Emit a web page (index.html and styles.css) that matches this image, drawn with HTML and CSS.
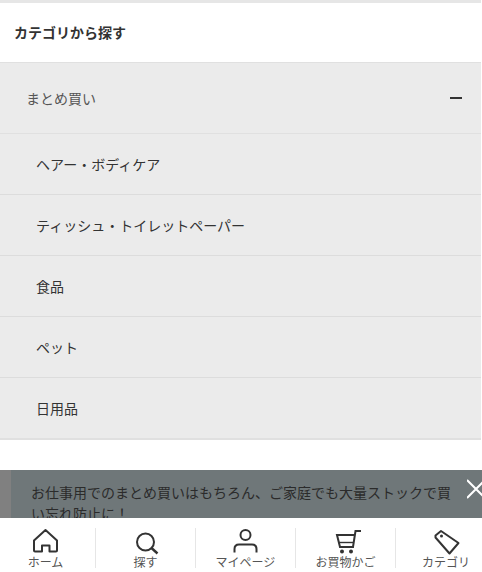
FILE: index.html
```html
<!doctype html>
<html lang="ja">
  <head>
    <meta charset="utf-8">
    <meta name="viewport" content="width=device-width, initial-scale=1">
    <title>カテゴリから探す</title>
    <link rel="stylesheet" href="styles.css">
  </head>
  <body>
    <div class="page">
      <div class="content">
        <h2 class="section-title">カテゴリから探す</h2>
        <div class="accordion">
          <div class="accordion-head">
            <span>まとめ買い</span>
            <span class="minus"></span>
          </div>
          <ul class="sub-list">
            <li>ヘアー・ボディケア</li>
            <li>ティッシュ・トイレットペーパー</li>
            <li>食品</li>
            <li>ペット</li>
            <li>日用品</li>
          </ul>
        </div>
      </div>
      <div class="banner">
        <div class="banner-side"></div>
        <p class="banner-text">お仕事用でのまとめ買いはもちろん、ご家庭でも大量ストックで買い忘れ防止に！</p>
        <svg class="banner-close" width="20" height="20" viewBox="0 0 20 20">
          <path d="M0 1L18 19M18 1L0 19" stroke="#fff" stroke-width="2" fill="none"/>
        </svg>
      </div>
      <nav class="tabbar">
        <a class="tab">
          <svg width="31" height="27" viewBox="0 0 31 27" fill="none" stroke="#333" stroke-width="2" stroke-linejoin="round">
            <path d="M15.500 2L27 12.500V22.500Q27 23.500 26 23.500H19.500V17.500H12V23.500H5Q4 23.500 4 22.500V12.500Z"/>
          </svg>
          <span>ホーム</span>
        </a>
        <a class="tab">
          <svg width="31" height="27" viewBox="0 0 31 27" fill="none" stroke="#333" stroke-width="2">
            <circle cx="15.500" cy="14" r="8.500"/>
            <path d="M21.500 20L27.500 25.500" stroke-width="2.400"/>
          </svg>
          <span>探す</span>
        </a>
        <a class="tab">
          <svg width="31" height="27" viewBox="0 0 31 27" fill="none" stroke="#333" stroke-width="2">
            <circle cx="15.500" cy="7" r="5"/>
            <path d="M4.500 24.500V21Q4.500 16.500 9 16.500H22Q26.500 16.500 26.500 21V24.500"/>
          </svg>
          <span>マイページ</span>
        </a>
        <a class="tab">
          <svg width="31" height="27" viewBox="0 0 31 27" fill="none" stroke="#333" stroke-width="2">
            <path d="M31 3H25.500L23 19H10L7 7H24"/>
            <path d="M9 14.500H23.500" stroke-width="1.400"/>
            <circle cx="12" cy="23.500" r="2" fill="#333" stroke="none"/>
            <circle cx="21" cy="23.500" r="2" fill="#333" stroke="none"/>
          </svg>
          <span>お買物かご</span>
        </a>
        <a class="tab">
          <svg width="31" height="27" viewBox="0 0 31 27" fill="none" stroke="#333" stroke-width="2" stroke-linejoin="round">
            <path d="M4.500 7.500L10 3L27.500 15L18.500 25.500L4.500 9.500Z"/>
            <circle cx="10.500" cy="8" r="1.500" fill="#333" stroke="none"/>
          </svg>
          <span>カテゴリ</span>
        </a>
      </nav>
    </div>
  </body>
</html>
```

FILE: styles.css
```css
*{
    box-sizing: border-box;
}
body{
    margin:0;
    font-family: "Noto Sans CJK JP","Noto Sans",sans-serif;
    color:#333;
    background-color:white;
}
.page{
    width:100%;
    height:572px;
    display:flex;
    flex-direction: column;
    overflow:hidden;
}
.content{
    width:481px;
    height:470px;
    flex-shrink:0;
    border-top:3px solid #e6e6e6;
}
.section-title{
    height:60px;
    margin:0;
    padding:0 0 2px 14px;
    display:flex;
    align-items: center;
    font-size:14px;
    font-weight:700;
    border-bottom:1px solid #e0e0e0;
}
.accordion{
    background-color:#ebebeb;
    border-bottom:2px solid #e0e0e0;
}
.accordion-head{
    height:71px;
    padding:0 19px 0 26px;
    display:flex;
    align-items: center;
    justify-content: space-between;
    font-size:14px;
    color:#555;
    border-bottom:1px solid #e0e0e0;
}
.minus{
    width:12px;
    height:2px;
    background-color:#333;
}
.sub-list{
    list-style:none;
    margin:0;
    padding:0;
}
.sub-list li{
    height:61px;
    padding-left:36px;
    display:flex;
    align-items: center;
    font-size:14px;
    border-bottom:1px solid #dcdcdc;
}
.sub-list li:last-child{
    height:60px;
    border-bottom:none;
}
.banner{
    height:48px;
    flex-shrink:0;
    display:flex;
    background-color:#6f7779;
    position:relative;
    overflow:hidden;
}
.banner-side{
    width:11px;
    flex-shrink:0;
    background-color:#808080;
}
.banner-text{
    width:430px;
    margin:12px 0 0 20px;
    font-size:14px;
    line-height:21px;
    color:#2b2b2b;
}
.banner-close{
    position:absolute;
    top:9px;
    left:467px;
}
.tabbar{
    height:54px;
    flex-shrink:0;
    display:flex;
    margin-left:-4px;
    padding-top:10px;
    background-color:white;
}
.tab{
    width:100px;
    height:40px;
    flex-shrink:0;
    display:flex;
    flex-direction: column;
    align-items: center;
    border-right:1px solid #e6e6e6;
    font-size:12px;
    line-height:14px;
    color:#555;
}
.tab:last-child{
    border-right:none;
}
.tab svg{
    flex-shrink:0;
}
.tab span{
    white-space:nowrap;
}
```
